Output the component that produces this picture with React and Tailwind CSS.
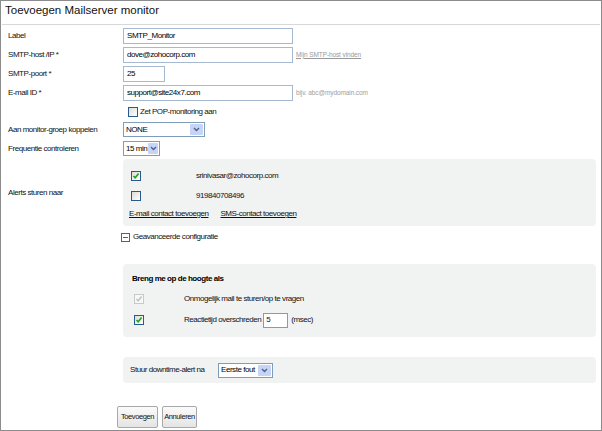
const font = "font-['Liberation_Sans',Arial,sans-serif]";

function Check({ checked, disabled }) {
  return (
    <span
      className={
        "inline-flex h-[10px] w-[10px] items-center justify-center border " +
        (disabled ? "border-[#c9c9c9] bg-[#f7f7f7]" : "border-[#2a5a8c] bg-gradient-to-br from-[#dcdcd6] to-white")
      }
    >
      {checked && (
        <svg width="8" height="8" viewBox="0 0 8 8">
          <path d="M1.5 4 L3.2 5.8 L6.6 1.6" fill="none" stroke={disabled ? "#c4c4c4" : "#21a121"} strokeWidth="1.6" />
        </svg>
      )}
    </span>
  );
}

function Select({ value, width }) {
  return (
    <div className={"flex h-[15px] items-center border border-[#7f9db9] bg-white " + width}>
      <span className="flex-1 whitespace-nowrap pl-[2px] text-[#000]">{value}</span>
      <span className="m-[1px] flex h-[11px] w-[13px] items-center justify-center rounded-[1px] bg-[#c6d5f7]">
        <svg width="7" height="5" viewBox="0 0 7 5">
          <path d="M1 1 L3.5 3.5 L6 1" fill="none" stroke="#4d6185" strokeWidth="1.4" />
        </svg>
      </span>
    </div>
  );
}

function Field({ label, children }) {
  return (
    <div className="grid h-[19px] grid-cols-[122px_1fr] items-center">
      <span className="whitespace-nowrap pl-[7px]">{label}</span>
      <div className="flex items-center">{children}</div>
    </div>
  );
}

function TextBox({ value, width }) {
  return (
    <div className={"flex h-[16px] items-center border border-[#a5b9d0] bg-white pl-[3px] text-[#000] " + width}>
      {value}
    </div>
  );
}

function Button({ children, width }) {
  return (
    <span
      className={
        "flex h-[22px] items-center justify-center rounded-[2px] border border-[#a8a8a8] bg-gradient-to-b from-[#fbfbfb] to-[#e4e4e4] text-[7.5px] tracking-[-0.4px] text-[#111] " +
        width
      }
    >
      {children}
    </span>
  );
}

export default function App() {
  return (
    <div className={"h-[431px] w-[602px] overflow-hidden border border-[#8c8c8c] bg-white text-[8px] tracking-[-0.45px] text-[#111] " + font}>
      <div className="mx-[1px] flex h-[24px] items-center border-b border-[#d8d8d8] pb-[3px] pl-[3px] text-[11.5px] tracking-normal text-[#111]">
        Toevoegen Mailserver monitor
      </div>

      <div className="pt-[1px]">
        <Field label="Label">
          <TextBox value="SMTP_Monitor" width="w-[170px]" />
        </Field>
        <Field label="SMTP-host /IP  *">
          <TextBox value="dove@zohocorp.com" width="w-[170px]" />
          <span className="ml-[3px] text-[6.5px] tracking-[-0.1px] text-[#999] underline">Mijn SMTP-host vinden</span>
        </Field>
        <Field label="SMTP-poort *">
          <TextBox value="25" width="w-[42px]" />
        </Field>
        <Field label="E-mail ID *">
          <TextBox value="support@site24x7.com" width="w-[170px]" />
          <span className="ml-[3px] text-[6.5px] tracking-[-0.1px] text-[#a0a0a0]">bijv. abc@mydomain.com</span>
        </Field>
        <div className="grid h-[18px] grid-cols-[122px_1fr] items-center">
          <span />
          <div className="flex items-center pl-[5px] pt-[2px]">
            <Check />
            <span className="ml-[2px]">Zet POP-monitoring aan</span>
          </div>
        </div>
        <Field label="Aan monitor-groep koppelen">
          <Select value="NONE" width="w-[82px]" />
        </Field>
        <Field label="Frequentie controleren">
          <Select value="15 min" width="w-[37px]" />
        </Field>

        <div className="mt-[1px] grid grid-cols-[122px_473px] items-center">
          <span className="pl-[7px]">Alerts sturen naar</span>
          <div className="h-[67px] rounded-[4px] bg-[#f1f2f2] pl-[8px] pt-[10px]">
            <div className="grid h-[14px] grid-cols-[65px_1fr] items-center">
              <Check checked />
              <span>srinivasar@zohocorp.com</span>
            </div>
            <div className="mt-[6px] grid h-[14px] grid-cols-[65px_1fr] items-center">
              <Check />
              <span>919840708496</span>
            </div>
            <div className="mt-[4px] flex h-[14px] items-center gap-[12px]">
              <span className="-ml-[2px] underline">E-mail contact toevoegen</span>
              <span className="underline">SMS-contact toevoegen</span>
            </div>
          </div>
        </div>

        <div className="mt-[3px] flex h-[16px] items-center pl-[120px]">
          <span className="flex h-[9px] w-[9px] items-center justify-center border border-[#3f63a8] bg-white">
            <span className="h-[1px] w-[5px] bg-[#3f63a8]" />
          </span>
          <span className="ml-[3px]">Geavanceerde configuratie</span>
        </div>

        <div className="ml-[122px] mt-[19px] h-[73px] w-[473px] rounded-[4px] bg-[#f1f2f2] pl-[9px] pt-[9px]">
          <div className="h-[12px] font-bold text-[#000]">Breng me op de hoogte als</div>
          <div className="mt-[7px] grid h-[14px] grid-cols-[50px_1fr] items-center pl-[2px]">
            <Check checked disabled />
            <span>Onmogelijk mail te sturen/op te vragen</span>
          </div>
          <div className="mt-[6px] grid h-[16px] grid-cols-[50px_1fr] items-center pl-[2px]">
            <Check checked />
            <div className="flex items-center">
              <span>Reactietijd overschreden</span>
              <div className="ml-[2px] flex h-[15px] w-[25px] items-center border border-[#7f9db9] bg-white pl-[2px]">5</div>
              <span className="ml-[3px]">(msec)</span>
            </div>
          </div>
        </div>

        <div className="ml-[122px] mt-[20px] flex h-[26px] w-[473px] items-center rounded-[4px] bg-[#f1f2f2] pl-[7px]">
          <span className="w-[88px] whitespace-nowrap">Stuur downtime-alert na</span>
          <Select value="Eerste fout" width="w-[55px]" />
        </div>

        <div className="ml-[116px] mt-[23px] flex gap-[4px]">
          <Button width="w-[41px]">Toevoegen</Button>
          <Button width="w-[35px]">Annuleren</Button>
        </div>
      </div>
    </div>
  );
}
